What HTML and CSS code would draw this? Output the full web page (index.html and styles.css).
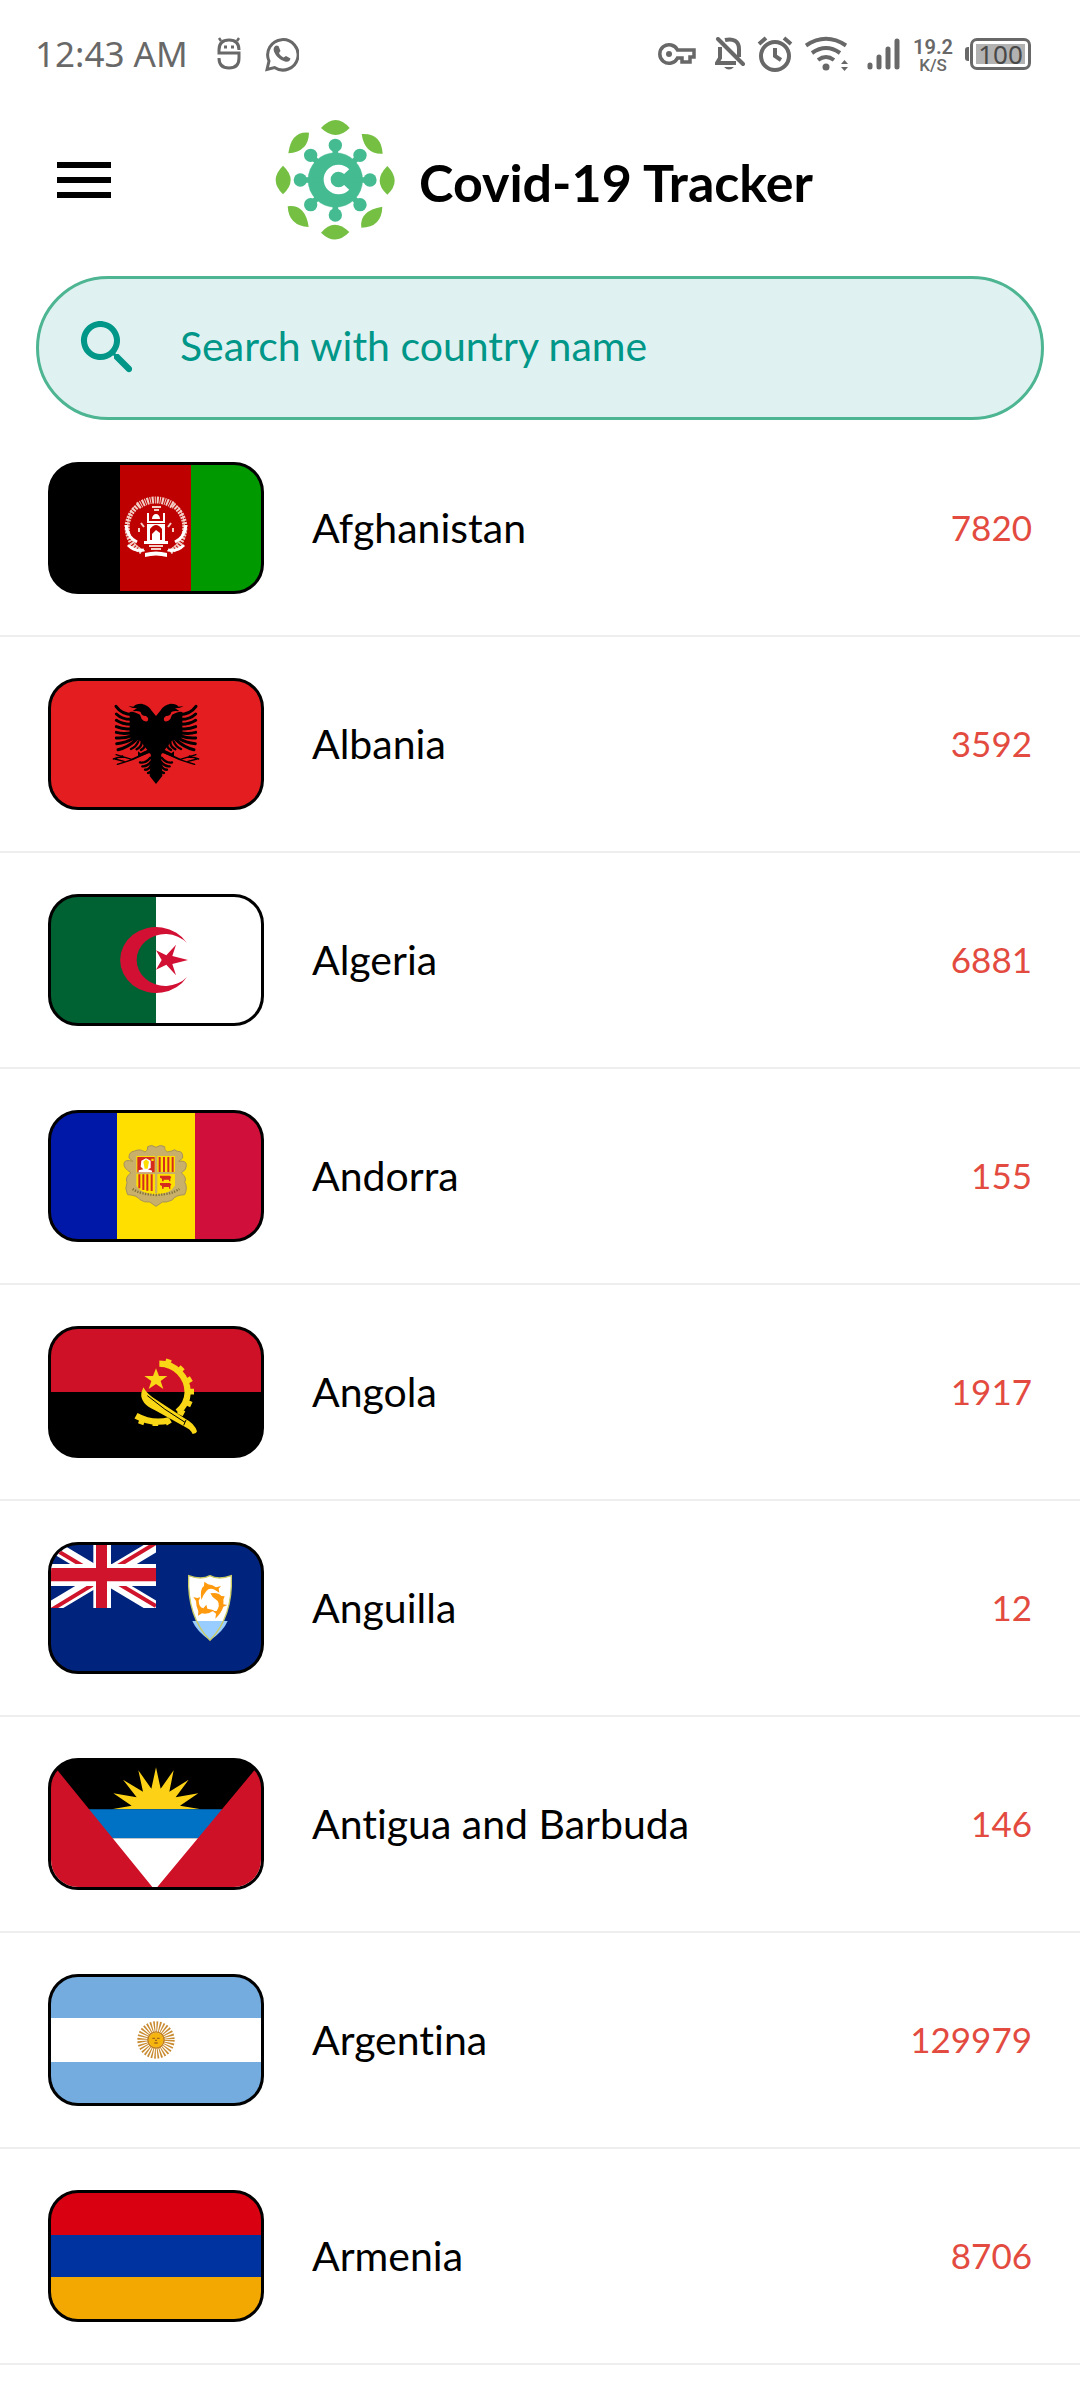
FILE: index.html
```html
<!DOCTYPE html>
<html lang="en">
<head>
<meta charset="utf-8">
<meta name="viewport" content="width=device-width, initial-scale=1">
<title>Covid-19 Tracker</title>
<link rel="stylesheet" href="styles.css">
</head>
<body>
<div class="status">
  <span class="time">12:43 AM</span>
  <svg class="s-app" width="24" height="34" viewBox="0 0 24 34" fill="none" stroke="#686868" stroke-width="3"><path d="M22 13C22 6 18 3 12 3S2 6 2 13V16H22V21C22 28 18 31 12 31S2 28 2 21"/><path d="M2 1L4 4M22 1L20 4" stroke-width="2.500"/><path d="M7 10h3M14 10h3"/></svg>
  <svg class="s-wa" width="34" height="36" viewBox="0 0 34 36"><path d="M2 33.500L4 25A15.200 15.200 0 1 1 9.500 31.500Z" fill="none" stroke="#686868" stroke-width="3"/><path d="M11 9.500c-2 1-3 3-2 6 2 5 6 8.500 11 10 3 1 5-.5 5.500-3l-4.500-2.500-2.500 1.500c-2-1-4-3-4.500-4.500l1.500-2-2-5z" fill="#686868"/></svg>
  <span class="spacer"></span>
  <svg class="s-key" width="38" height="24" viewBox="0 0 38 24" fill="none" stroke="#686868" stroke-width="3.500"><path d="M19.500 8A9.300 9.300 0 1 0 19.500 16H24V20H32V15H36V8Z"/><circle cx="11" cy="12" r="3" fill="#686868" stroke="none"/></svg>
  <svg class="s-bell" width="30" height="34" viewBox="0 0 30 34" fill="none" stroke="#686868" stroke-width="4"><path d="M5 10V21L2 26H21M10 3C18 1 24 4 24 12V20"/><path d="M3 2L28 27" stroke-linecap="round"/><path d="M9 30H19Q14 35 9 30Z" fill="#686868" stroke="none"/></svg>
  <svg class="s-alarm" width="36" height="36" viewBox="0 0 36 36" fill="none" stroke="#686868" stroke-width="4"><circle cx="18" cy="20" r="14"/><path d="M18 12V20L24 24M2 8L9 2M34 8L27 2"/></svg>
  <svg class="s-wifi" width="44" height="36" viewBox="0 0 44 36" fill="none" stroke="#686868" stroke-width="4"><path d="M1 9.500Q21-4 41 9.500M7 17Q21 7 35 17M13 24Q21 18 29 24"/><circle cx="21" cy="31" r="3.500" fill="#686868" stroke="none"/><path d="M36 28l3.500-4 3.500 4zM36 31h7l-3.500 4z" fill="#686868" stroke="none"/></svg>
  <svg class="s-signal" width="34" height="34" viewBox="0 0 34 34" stroke="#686868" stroke-width="5" stroke-linecap="round"><path d="M3 28V30M12 20V30M21 12V30M30 4V30"/></svg>
  <span class="speed"><span>19.2</span><span class="unit">K/S</span></span>
  <span class="battery"><span class="charge">100</span></span>
</div>

<header class="bar">
  <button class="menu" type="button" aria-label="Menu"><svg width="72" height="72" viewBox="0 0 24 24"><path d="M3 18h18v-2H3zm0-5h18v-2H3zm0-7v2h18V6z"/></svg></button>
  <div class="brand">
    <svg width="120" height="120" viewBox="49 60 360 360" aria-hidden="true">
      <g fill="#75c043">
        <path d="M187 84Q232 36 273 84Q232 126 187 84Z"/>
        <path d="M187 398Q226 351 272 396Q230 440 187 398Z"/>
        <path d="M73 197Q119 240 73 283Q29 240 73 197Z"/>
        <path d="M386 198Q430 243 386 284Q340 244 386 198Z"/>
        <path d="M151 98Q98 92 89 160Q150 155 151 98Z"/>
        <path d="M309 102Q368 98 372 161Q318 164 309 102Z"/>
        <path d="M87 319Q140 312 150 381Q90 378 87 319Z"/>
        <path d="M371 320Q369 382 308 383Q301 332 371 320Z"/>
      </g>
      <g fill="#45bb92" stroke="#45bb92">
        <circle cx="230" cy="240" r="82"/>
        <g stroke-width="17"><path d="M230 135V345M125 240H335M156 166L304 314M304 166L156 314"/></g>
        <g stroke="none"><circle cx="230" cy="136" r="20"/><circle cx="230" cy="345" r="20"/><circle cx="125" cy="240" r="20"/><circle cx="334" cy="240" r="20"/><circle cx="156" cy="166" r="20"/><circle cx="304" cy="166" r="20"/><circle cx="156" cy="314" r="20"/><circle cx="304" cy="314" r="20"/></g>
      </g>
      <path d="M264 215A34 34 0 1 0 264 262" fill="none" stroke="#fff" stroke-width="21"/>
      <path d="M232 240L280 214V264Z" fill="#45bb92"/>
    </svg>
    <h1>Covid-19 Tracker</h1>
  </div>
</header>

<main>
<label class="search">
  <svg width="72" height="72" viewBox="0 0 24 24" fill="#009688" aria-hidden="true"><path d="M15.500 14h-.79l-.28-.27c1.200-1.400 1.820-3.310 1.480-5.340-.47-2.780-2.790-5-5.590-5.340-4.230-.52-7.790 3.040-7.270 7.270.34 2.800 2.560 5.120 5.340 5.590 2.030.34 3.940-.28 5.340-1.480l.27.28v.79l4.250 4.250c.41.41 1.080.41 1.490 0 .41-.41.41-1.080 0-1.490L15.500 14zm-6 0C7.010 14 5 11.990 5 9.500S7.010 5 9.500 5 14 7.010 14 9.500 11.990 14 9.500 14z"/></svg>
  <input type="search" placeholder="Search with country name" aria-label="Search with country name">
</label>

<ul class="list">
<li>
  <svg class="flag" viewBox="0 0 210 126"><path fill="#000" d="M0 0h70v126H0z"/><path fill="#be0000" d="M69 0h71v126H69z"/><path fill="#090" d="M140 0h70v126h-70z"/>
    <g fill="none" stroke="#f3cfc6"><path d="M88 40A29 28 0 0 0 91 87M122 40A29 28 0 0 1 119 87" stroke-width="5" stroke-dasharray="2 1"/><path d="M83 42A27 28 0 0 0 94 86M127 42A27 28 0 0 1 116 86" stroke-width="1"/><path d="M87 41Q105 29 123 41" stroke-width="7" stroke-dasharray="2 1 1 1"/><path d="M101 42h9M103 45h5M90 58l3 4M120 58l-3 4M88 63v4M122 63v4M98 81h14M100 84h10" stroke-width="2"/><path d="M75 60Q76 72 86 77M135 60Q134 72 124 77M77 80Q84 87 93 85M133 80Q126 87 117 85" stroke="#fff" stroke-width="3"/></g>
    <g fill="#fff"><path d="M96 76V56h18v20h3v3H93v-3zM101 54a4 5 0 0 1 8 0zM96 48h2v8h-2zM112 48h2v8h-2zM94 88q11-3 22 0v4q-11-3-22 0z"/></g><path fill="#be0000" d="M99 75V64q6-8 12 0v11h-2V68l-4-3-4 4v6zM96 58h18v1H96z"/><path fill="#fff" d="M103 75q-1-7 3-8 3 4 2 8z"/></svg>
  <span class="name">Afghanistan</span><span class="count">7820</span></li>
<li>
  <svg class="flag" viewBox="33 33 630 378"><path fill="#e41e20" d="M33 33h630v378H33z"/>
    <g id="wing"><path d="M348 138L335 122Q326 106 304 101Q286 101 280 110L265 108Q277 116 291 115L277 124Q300 121 303 128Q303 136 318 138Q329 145 322 154Q311 156 305 147L300 134Q278 122 269 126V196Q280 206 302 214L322 240Q308 245 302 250L294 244V262L326 250Q335 246 332 268L329 318L348 342Z"/>
    <g fill="none" stroke="#000" stroke-width="9" stroke-linecap="round"><path d="M278 134Q245 133 228 109M275 148Q247 149 229 132M275 163Q249 164 229 151M275 176Q249 179 229 170M275 188Q249 193 229 187M277 197Q252 206 229 204M281 204Q258 219 230 221M289 208Q265 232 234 239"/><g stroke-width="7"><path d="M295 214Q289 230 273 237M305 216Q305 230 290 238M314 220Q318 232 303 240M331 263Q316 281 300 277M333 275Q321 291 307 289M333 286Q326 301 315 299M336 299Q330 309 324 309"/></g><g stroke-width="4"><path d="M322 247L275 268L228 254M318 250Q280 270 232 283M248 258L220 267M252 274L225 267"/></g></g></g>
    <use href="#wing" transform="matrix(-1 0 0 1 696 0)"/></svg>
  <span class="name">Albania</span><span class="count">3592</span></li>
<li>
  <svg class="flag" viewBox="33 36 630 378"><path fill="#006233" d="M33 36h315v378H33z"/><path fill="#fff" d="M348 36h315v378H348z"/><path fill="#d21034" d="M441 174A108 99 0 1 0 441 276A86 78 0 1 1 441 174ZM444 225L397 237L408 271L379 239L348 254L365 225L348 196L379 211L408 179L397 213Z"/></svg>
  <span class="name">Algeria</span><span class="count">6881</span></li>
<li>
  <svg class="flag" viewBox="33 39 630 378"><path fill="#0018a8" d="M33 39h198v378H33z"/><path fill="#fedf00" d="M231 39h234v378H231z"/><path fill="#d0103a" d="M465 39h198v378H465z"/>
    <path fill="#c8b06a" stroke="#a8935a" stroke-width="3" d="M323 140Q335 132 348 142Q361 132 374 140Q372 150 382 156L395 153Q404 145 412 154Q430 152 428 174L416 184Q440 180 439 197Q440 210 424 218Q442 235 434 246Q444 262 434 284Q405 285 397 300Q380 308 367 306L348 319L329 306Q312 308 300 299Q290 285 263 284Q253 265 261 248Q254 232 273 218Q250 205 252 190Q254 177 279 184L267 174Q266 155 284 153Q300 145 315 156Q325 152 323 140Z"/>
    <path fill="#fedf00" d="M289 168h116v88q-10 24-57 28-50-4-59-28z"/><path fill="#c8b06a" d="M345 168h7v112h-7zM289 216h116v6H289z"/><path fill="#d52b1e" d="M292 171h52v46h-52z"/><path fill="#fff" d="M304 182l14-7 14 7v22l-8 4 12 4v5h-40v-6l14-3-8-8z"/><path fill="#fedf00" d="M310 185l8-7 9 7-4 21h-9zM334 176h7v7h-7z"/>
    <path stroke="#d52b1e" stroke-width="6" d="M359 171v45M372 171v45M385 171v45M398 171v45M298 223v42M310 223v47M322 223v49M335 223v50"/><path fill="#d52b1e" d="M360 227h29l5 4-3 5v8h-4v-5h-16v5h-5v-8l-6-3zM360 249h29l5 4-3 5v8h-4v-5h-16v5h-5v-8l-6-3z"/><path d="M278 267Q300 283 348 285Q396 283 418 267" fill="none" stroke="#81713b" stroke-width="7" stroke-dasharray="4 4"/></svg>
  <span class="name">Andorra</span><span class="count">155</span></li>
<li>
  <svg class="flag" viewBox="33 39 630 378"><path fill="#ce1126" d="M33 39h630v190H33z"/><path d="M33 228h630v189H33z"/>
    <g fill="none" stroke="#f9d616"><path stroke-width="19" d="M358 143A85 87 0 0 1 443 230Q442 264 413 288M288 299Q335 325 387 313"/><path stroke-width="17" d="M382 146L387 130M415 167L428 154M439 197L454 188M444 227H462M437 258L454 266M415 284L432 293M308 309L302 325M346 313V330M380 310L388 324"/></g>
    <path fill="#f9d616" d="M348 157L357 180H382L362 195L370 219L348 204L326 219L334 195L313 180H339ZM310 214Q322 236 350 252L437 309Q463 322 471 346Q469 355 457 353Q453 340 429 329L345 283Q300 263 304 231Z"/><path d="M322 239Q370 280 435 319" stroke="#000" stroke-width="3" fill="none"/><path d="M438 312L431 328" stroke="#000" stroke-width="3"/></svg>
  <span class="name">Angola</span><span class="count">1917</span></li>
<li>
  <svg class="flag" viewBox="33 39 630 378"><path fill="#00247d" d="M33 39h630v378H33z"/>
    <svg x="33" y="39" width="315" height="189" viewBox="0 0 315 189"><path d="M0 0L315 189M315 0L0 189" stroke="#fff" stroke-width="38"/><path d="M0 6L157 100M315 183L157 89M0 195L157 100M315-6L157 89" stroke="#cf142b" stroke-width="12"/><path d="M127 0h53v189h-53zM0 57h315v66H0z" fill="#fff"/><path d="M135 0h33v189h-33zM0 69h315v40H0z" fill="#cf142b"/></svg>
    <path fill="#fff" d="M446 131Q485 145 510 131Q535 145 574 131Q579 254 510 325Q441 254 446 131Z"/><path fill="#9cf" d="M457 267H563Q550 298 510 325Q470 298 457 267Z"/><path fill="none" stroke="#c9cb64" stroke-width="4" d="M446 131Q485 145 510 131Q535 145 574 131Q579 254 510 325Q441 254 446 131Z"/>
    <path fill="#ff9a0e" d="M484 204Q479 170 492 162L493 149L504 157Q518 159 528 166L543 162L536 170L538 182L524 173Q507 167 500 176Q489 188 484 204ZM511 184Q535 180 544 192L554 193L550 203Q551 211 550 217L562 219L550 224Q544 243 526 260L528 245L518 237L530 237Q541 220 533 207L518 195ZM460 195L471 198L481 196L476 206Q477 226 490 229L499 218L502 230L523 235Q505 248 486 244L474 251L475 238Q468 224 468 207Z"/></svg>
  <span class="name">Anguilla</span><span class="count">12</span></li>
<li>
  <svg class="flag" viewBox="33 39 630 378"><path d="M33 39h630v378H33z"/><path fill="#fcd116" d="M215 184L275 173L220 136L290 148L249 95L309 131L295 67L334 122L348 58L362 122L401 67L388 131L446 95L407 148L475 136L420 173L483 184Z"/><path fill="#0072c6" d="M33 184h630v87H33z"/><path fill="#fff" d="M33 271h630v146H33z"/><path fill="#ce1126" d="M33 43L337 417H33ZM663 43L352 417H663Z"/></svg>
  <span class="name">Antigua and Barbuda</span><span class="count">146</span></li>
<li>
  <svg class="flag" viewBox="33 51 630 378"><path fill="#74acdf" d="M33 51h630v378H33z"/><path fill="#fff" d="M33 174h630v132H33z"/><circle cx="348" cy="240" r="40" fill="none" stroke="#c98b32" stroke-width="32" stroke-dasharray="4 3.854"/><circle cx="348" cy="240" r="24" fill="none" stroke="#c08024" stroke-width="5"/><circle cx="348" cy="240" r="22" fill="#f6b40e"/><path d="M337 235h8M351 235h8M345 241h6M343 249h10" stroke="#a5681a" stroke-width="4"/></svg>
  <span class="name">Argentina</span><span class="count">129979</span></li>
<li>
  <svg class="flag" viewBox="0 0 210 126"><path fill="#d90012" d="M0 0h210v42H0z"/><path fill="#0033a0" d="M0 42h210v42H0z"/><path fill="#f2a800" d="M0 84h210v42H0z"/></svg>
  <span class="name">Armenia</span><span class="count">8706</span></li>
</ul>
</main>
</body>
</html>
```
FILE: styles.css
```css
* { box-sizing: border-box; }
body { margin: 0; background: #fff; color: #000; font-family: Lato, sans-serif; font-variant-ligatures: none; }

.status { display: flex; align-items: center; height: 108px; padding: 0 49px 0 35px; color: #686868; }
.status svg { flex: none; }
.time { font: 35px/48px "Noto Sans", sans-serif; }
.s-app { margin-left: 29px; }
.s-wa { margin-left: 24px; }
.spacer { flex: 1; }
.s-bell { margin-left: 19px; }
.s-alarm { margin-left: 12px; }
.s-wifi { margin-left: 12px; }
.s-signal { margin-left: 18px; }
.speed { display: flex; flex-direction: column; align-items: center; margin-left: 12px; padding-top: 4px; font: 600 20px/18px Roboto, sans-serif; }
.unit { font-size: 17px; font-weight: 500; }
.battery { position: relative; display: flex; margin-left: 17px; padding: 3px; width: 61px; height: 32px; border: 3px solid #686868; border-radius: 7px; }
.battery::before { content: ""; position: absolute; left: -8px; top: 6px; width: 4px; height: 14px; border-radius: 3px 0 0 3px; background: #686868; }
.charge { flex: 1; background: #b2b2b2; color: #484848; font: 26px/20px "Noto Sans", sans-serif; text-align: center; }

.bar { display: grid; grid-template-columns: 72px 1fr 72px; align-items: center; height: 144px; padding: 0 48px; }
.menu { width: 72px; height: 72px; padding: 0; border: 0; background: none; }
.menu svg { display: block; }
.brand { display: flex; align-items: center; justify-content: center; gap: 24px; padding-left: 8px; }
h1 { margin: 0; padding-top: 4px; font-size: 52px; line-height: 60px; font-weight: 700; white-space: nowrap; }

.search { display: flex; align-items: center; gap: 36px; height: 144px; margin: 24px 36px 1px; padding: 0 33px; border: 3px solid #4db592; border-radius: 72px; background: #dff2f1; }
.search svg { flex: none; }
.search input { flex: 1; min-width: 0; padding: 0 0 4px; border: 0; outline: 0; background: none; color: #009688; font: 41px/54px Lato, sans-serif; font-variant-ligatures: none; }
.search input::placeholder { color: #009688; opacity: 1; }

.list { margin: 0; padding: 0; list-style: none; }
.list li { display: flex; align-items: center; padding: 41px 48px; border-bottom: 2px solid #eee; }
.flag { flex: none; width: 216px; height: 132px; border: 3px solid #000; border-radius: 30px; background: #000; }
.name { flex: 1; margin-left: 48px; font-size: 41px; line-height: 54px; }
.count { padding-bottom: 2px; font-size: 35px; line-height: 48px; color: #e34b40; }
```
